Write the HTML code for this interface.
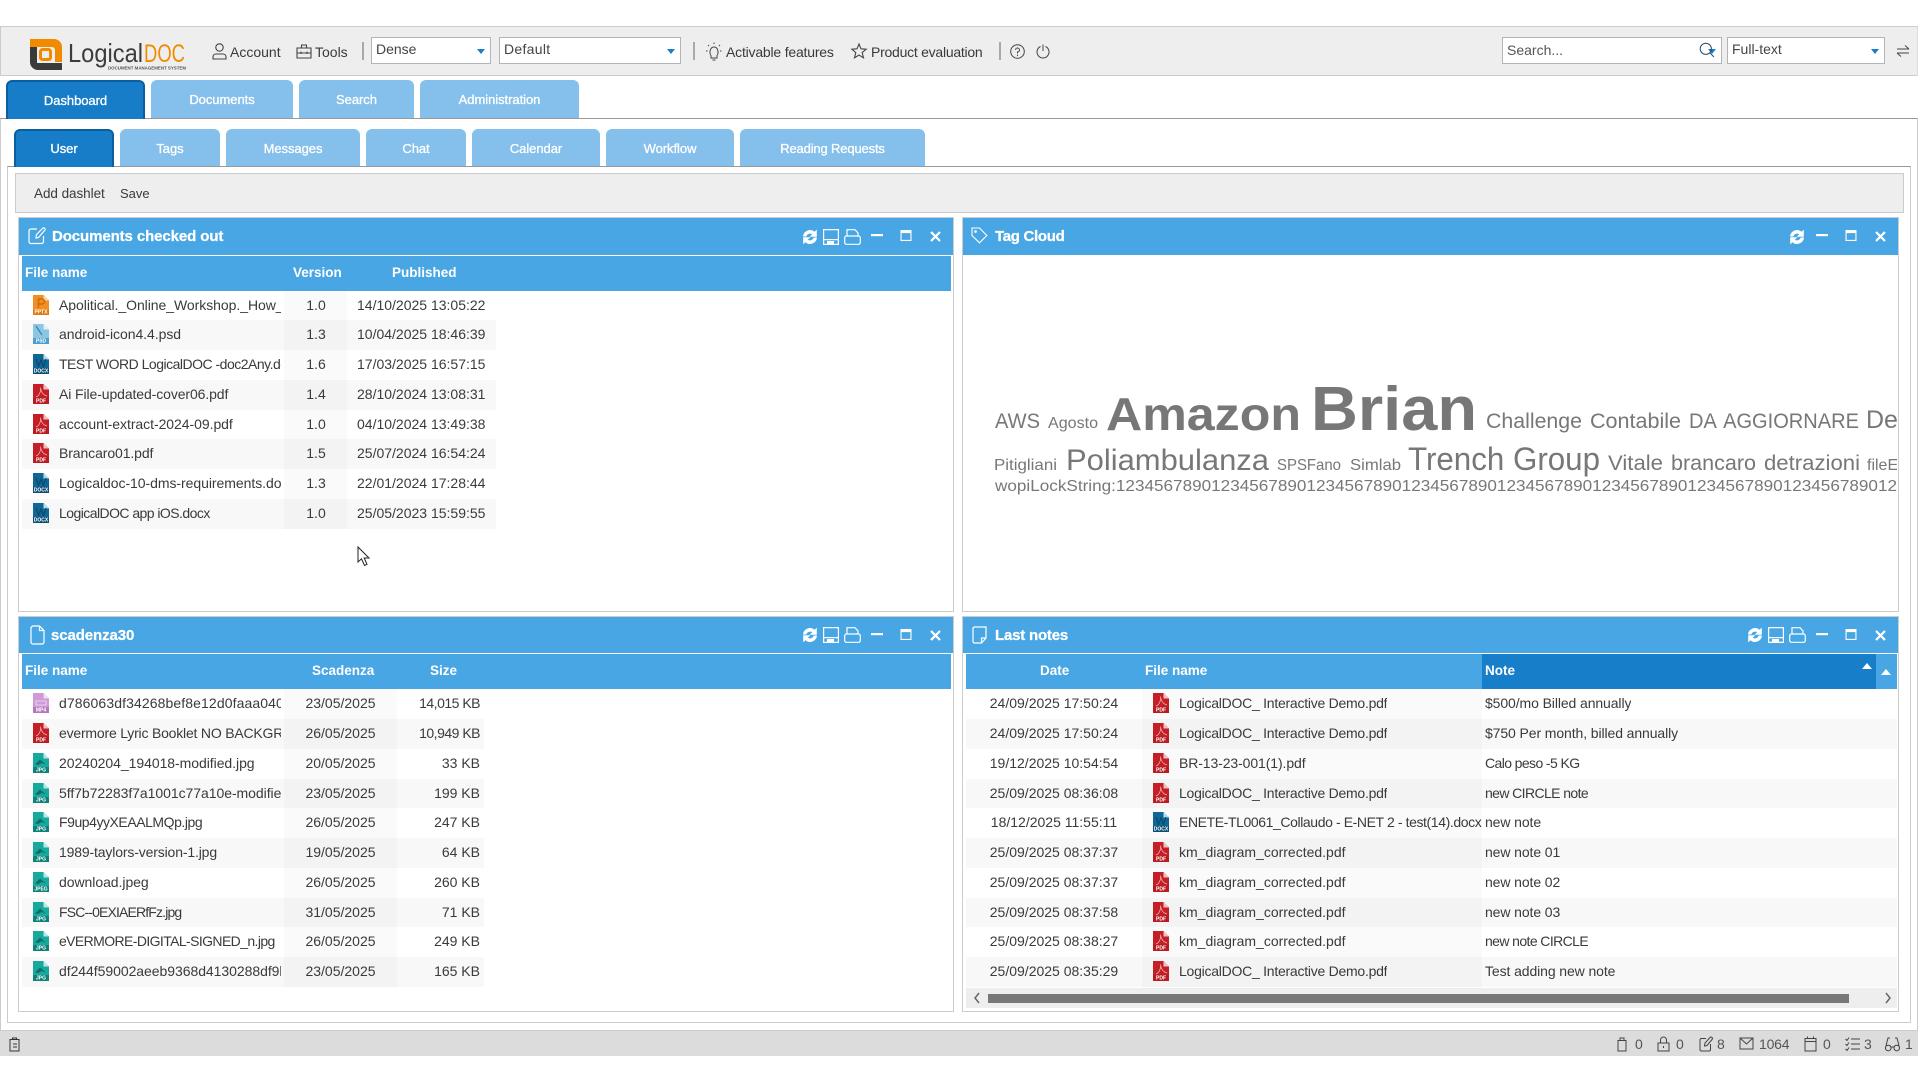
<!DOCTYPE html>
<html lang="en"><head><meta charset="utf-8"><title>LogicalDOC</title>
<style>
html,body{margin:0;padding:0;background:#fff}
body{width:1920px;height:1080px;position:relative;overflow:hidden;font:14px "Liberation Sans",sans-serif;color:#3a3a3a}
.a{position:absolute;box-sizing:border-box}
.t{position:absolute;white-space:nowrap;line-height:20px;height:20px}
svg{position:absolute;overflow:visible}
.tab{position:absolute;box-sizing:border-box;background:#85bfec;color:#fff;font-size:13px;text-align:center;border-radius:6px 6px 0 0;-webkit-text-stroke:.3px #fff;letter-spacing:-.05px}
.tab.on{background:#187dc9;border:2px solid #0a5f9f;border-bottom:0}
.t1{top:80px;height:38px;line-height:40px}
.t2{top:129px;height:37px;line-height:39px}
.tab.t1.on{line-height:37px}
.tab.t2.on{line-height:36px}
.sel{position:absolute;top:37px;height:27px;background:#fff;border:1.5px solid #b4b4b4;box-sizing:border-box;line-height:23px;padding-left:4px;color:#444}
.sel:after{content:"";position:absolute;top:11px;right:5px;border:4.5px solid transparent;border-top:5.5px solid #1a7dc8;border-bottom:0}
.sep{position:absolute;top:42px;height:18px;width:1.5px;background:#a9a9a9}
.panel{position:absolute;box-sizing:border-box;border:1.5px solid #ccc;background:#fff}
.hd{position:absolute;background:#48a6e4}
.ttl{position:absolute;color:#fff;font-weight:bold;font-size:15px;line-height:20px;white-space:nowrap;letter-spacing:-.1px;-webkit-text-stroke:.25px #fff;margin-top:1px}
.th{position:absolute;color:#fff;font-weight:bold;font-size:13.5px;line-height:20px;white-space:nowrap;margin-top:-1px}
.r{position:absolute;height:30px;line-height:28px;white-space:nowrap}
.s{background:#f8f8f8}
.m{position:absolute;top:0;bottom:0;background:#fafafa}
.s .m{background:#f3f3f3}
.n{position:absolute;top:0;overflow:hidden}
.ic{left:11px;top:4px;width:16px;height:20px}
.ic text{font:bold 5px "Liberation Sans",sans-serif;fill:#fff;text-anchor:middle}
.p1{left:22px;width:474px}.p1 .m{left:262px;width:63px;text-align:center;padding-left:1px;box-sizing:border-box}
.p3{left:22px;width:462px}.p3 .m{left:262px;width:113px;text-align:center}
.p1 .n,.p3 .n{left:37px;width:222px;letter-spacing:-.05px}
.p4{left:966px;width:931px}.p4 .m{left:176px;width:340px}
.dt{position:absolute;left:335px}.sz{position:absolute;right:4px}
.sb{position:absolute;top:1034px;color:#555;line-height:20px}
svg.w{fill:none;stroke:#fff}
</style></head><body>
<svg width="0" height="0" style="position:absolute">
<defs>
<symbol id="rf" viewBox="0 0 16 16"><path fill="#fff" d="M1 7.500A7 7 0 0 1 12.600 2.800L14.800 .6V7.800H7.600L10.200 5.200A3.800 3.800 0 0 0 4.400 7.500Z M15 8.500A7 7 0 0 1 3.400 13.200L1.200 15.400V8.200H8.400L5.800 10.800A3.800 3.800 0 0 0 11.600 8.500Z"/></symbol>
<symbol id="sv" viewBox="0 0 16 16"><path fill="none" stroke="#fff" stroke-width="1.200" d="M.6.6H15.4V15.4H.6ZM.6 10.600H15.4"/><path fill="#fff" d="M4 12H11V15H4Z"/></symbol>
<symbol id="pr" viewBox="0 0 17 16"><path fill="none" stroke="#fff" stroke-width="1.200" d="M3 7V.7H11L14 4V7M2.500 7H14.500A1.800 1.800 0 0 1 16.300 8.800V13.500A1.800 1.800 0 0 1 14.500 15.300H2.500A1.800 1.800 0 0 1 .7 13.500V8.800A1.800 1.800 0 0 1 2.500 7Z"/></symbol>
<symbol id="mn" viewBox="0 0 12 3"><path fill="#fff" d="M0 0H12V2.200H0Z"/></symbol>
<symbol id="mx" viewBox="0 0 12 12"><path fill="none" stroke="#fff" stroke-width="1.200" d="M.6.6H11.400V11.400H.6Z"/><path fill="#fff" d="M0 0H12V3.400H0Z"/></symbol>
<symbol id="xx" viewBox="0 0 11 11"><path fill="none" stroke="#fff" stroke-width="2.200" d="M1 1L10 10M10 1L1 10"/></symbol>
<symbol id="pdf" viewBox="0 0 16 20"><path fill="#c41f26" d="M0 0H10.500L16 5.500V20H0Z"/><path fill="#f3c0c0" d="M10.500 0L16 5.500H10.500Z"/><path fill="none" stroke="#f0b5b5" stroke-width=".7" d="M3 13C6 12 8 8 7.500 3.500C8 8 10 11 14 12"/><path fill="#b81b21" d="M0 13.500H16V20H0Z"/></symbol>
<symbol id="doc" viewBox="0 0 16 20"><path fill="#0f6796" d="M0 0H10.500L16 5.500V20H0Z"/><path fill="#bcdcec" d="M10.500 0L16 5.500H10.500Z"/><path fill="none" stroke="#0a4a6e" stroke-width="1.200" d="M3 5L5.500 12.500L8 6L10.500 12.500L13 5"/><path fill="#0b4f74" d="M0 14H16V20H0Z"/></symbol>
<symbol id="jpg" viewBox="0 0 16 20"><path fill="#17a89e" d="M0 0H10.500L16 5.500V20H0Z"/><path fill="#b8e8e4" d="M10.500 0L16 5.500H10.500Z"/><path fill="#0b6f68" d="M2 11.500L7 6.500L13 11.500L9 10L5 12Z"/><path fill="#0e827a" d="M0 14H16V20H0Z"/></symbol>
<symbol id="ppt" viewBox="0 0 16 20"><path fill="#f28e22" d="M0 0H10.500L16 5.500V20H0Z"/><path fill="#fbd5a5" d="M10.500 0L16 5.500H10.500Z"/><path fill="none" stroke="#c96a0a" stroke-width="1.400" d="M5.500 13V4H9A2.500 2.500 0 0 1 9 9H5.500"/><path fill="#de7a12" d="M0 14.500H16V20H0Z"/></symbol>
<symbol id="psd" viewBox="0 0 16 20"><path fill="#8cc6e2" d="M0 0H10.500L16 5.500V20H0Z"/><path fill="#dff0f8" d="M10.500 0L16 5.500H10.500Z"/><path fill="none" stroke="#2f86b5" stroke-width="1.300" d="M3 2L9 11"/><path fill="#4ba0cb" d="M0 14H16V20H0Z"/></symbol>
<symbol id="mp4" viewBox="0 0 16 20"><path fill="#cf9ad6" d="M0 0H10.500L16 5.500V20H0Z"/><path fill="#eedcf0" d="M10.500 0L16 5.500H10.500Z"/><path fill="none" stroke="#f3e6f5" stroke-width=".8" d="M3 8H13V12H3Z"/><path fill="#b578bf" d="M0 14H16V20H0Z"/></symbol>
</defs>
</svg>

<!-- top bar -->
<div class="a" style="left:0;top:26px;width:1918px;height:50px;background:#eee;border:1.5px solid #ccc;border-right:1px solid #ddd"></div>
<svg style="left:28px;top:37px" width="160" height="36" viewBox="28 37 160 36">
<path fill="#f28a00" d="M30 39H54a8 8 0 0 1 8 8V62H55V50a3 3 0 0 0-3-3H30z"/>
<path fill="#3a3a3a" d="M30 47H37V63H62V70H38a8 8 0 0 1-8-8z"/>
<rect x="40.500" y="49.500" width="10" height="10" rx="2" fill="#eee" stroke="#f28a00" stroke-width="3"/>
<text x="68" y="62" font-family="Liberation Sans,sans-serif" font-size="26" fill="#3c3c3c" textLength="75" lengthAdjust="spacingAndGlyphs">Logical</text>
<text x="144" y="62" font-family="Liberation Sans,sans-serif" font-size="25" fill="#f28a00" textLength="41" lengthAdjust="spacingAndGlyphs">DOC</text>
<text x="108" y="69.500" font-family="Liberation Sans,sans-serif" font-size="4.500" font-weight="bold" fill="#555" textLength="78" lengthAdjust="spacingAndGlyphs">DOCUMENT MANAGEMENT SYSTEM</text>
</svg>

<svg style="left:212px;top:43px" width="15" height="17" viewBox="0 0 15 17" fill="none" stroke="#444" stroke-width="1.100"><circle cx="7.500" cy="4.500" r="3.700"/><path d="M1 16V13.500A3 3 0 0 1 4 11H11A3 3 0 0 1 14 13.500V16Z"/></svg>
<div class="t" style="left:230px;top:42px">Account</div>
<svg style="left:296px;top:43px" width="16" height="16" viewBox="0 0 16 16" fill="none" stroke="#444" stroke-width="1.100"><path d="M1 5H15V15H1ZM5.500 5V2H10.500V5M1 10H15M5 8.500V11M11 8.500V11"/></svg>
<div class="t" style="left:315px;top:42px">Tools</div>
<div class="sep" style="left:362px"></div>
<div class="sel" style="left:371px;width:120px">Dense</div>
<div class="sel" style="left:499px;width:182px;letter-spacing:.3px">Default</div>
<div class="sep" style="left:693px"></div>
<svg style="left:705px;top:42px" width="18" height="19" viewBox="0 0 18 19" fill="none" stroke="#444" stroke-width="1"><path d="M6 13.500C4 11 5 5 9 5S14 11 12 13.500V16H6ZM7.500 18H10.500"/><path stroke-dasharray="1.500 1" d="M1 9H3M15 9H17M3 3L4.500 4.500M15 3L13.500 4.500M9 .5V2.500"/></svg>
<div class="t" style="left:726px;top:42px;letter-spacing:-.2px">Activable features</div>
<svg style="left:851px;top:43px" width="16" height="16" viewBox="0 0 16 16" fill="none" stroke="#444" stroke-width="1.100"><path d="M8 1L10 5.800L15.200 6.200L11.200 9.600L12.500 14.800L8 12L3.500 14.800L4.800 9.600L.8 6.200L6 5.800Z"/></svg>
<div class="t" style="left:871px;top:42px;letter-spacing:-.25px">Product evaluation</div>
<div class="sep" style="left:999px"></div>
<svg style="left:1010px;top:44px" width="15" height="15" viewBox="0 0 15 15" fill="none" stroke="#444" stroke-width="1"><circle cx="7.500" cy="7.500" r="6.800"/><path d="M5.500 5.800A2 2 0 1 1 7.500 8V9.500M7.500 10.800V12"/></svg>
<svg style="left:1036px;top:44px" width="14" height="15" viewBox="0 0 14 15" fill="none" stroke="#444" stroke-width="1"><path d="M4.500 2.500A6 6 0 1 0 9.500 2.500M7 .5V7"/></svg>

<div class="sel" style="left:1502px;width:220px;color:#555;line-height:24px">Search...</div>
<svg style="left:1699px;top:42px" width="16" height="16" viewBox="0 0 16 16" fill="none" stroke="#2a4a66" stroke-width="1"><circle cx="6.800" cy="6.800" r="5.600"/><path d="M10.800 10.800L15 15"/></svg>
<div class="sel" style="left:1727px;width:158px">Full-text</div>
<svg style="left:1896px;top:44px" width="14" height="14" viewBox="0 0 14 14" fill="none" stroke="#444" stroke-width="1"><path d="M1 5H13M9 1.500L13 5M13 9H1M5 12.500L1 9"/></svg>

<!-- main frames -->
<div class="a" style="left:0;top:118px;width:1918px;height:913px;border:1.5px solid #ccc;border-top:1.5px solid #999;border-bottom:0"></div>
<div class="tab t1 on" style="left:6px;width:139px;height:39px">Dashboard</div>
<div class="tab t1" style="left:151px;width:142px">Documents</div>
<div class="tab t1" style="left:299px;width:115px">Search</div>
<div class="tab t1" style="left:420px;width:159px">Administration</div>

<div class="a" style="left:7px;top:166px;width:1904px;height:857px;border:1.5px solid #ccc;border-top:1.5px solid #999"></div>
<div class="tab t2 on" style="left:14px;width:100px;height:38px">User</div>
<div class="tab t2" style="left:120px;width:100px">Tags</div>
<div class="tab t2" style="left:226px;width:134px">Messages</div>
<div class="tab t2" style="left:366px;width:100px">Chat</div>
<div class="tab t2" style="left:472px;width:128px">Calendar</div>
<div class="tab t2" style="left:606px;width:128px">Workflow</div>
<div class="tab t2" style="left:740px;width:185px;letter-spacing:-.15px">Reading Requests</div>

<div class="a" style="left:15px;top:173px;width:1889px;height:40px;background:#eee;border:1.500px solid #ccc"></div>
<div class="t" style="left:34px;top:184px;font-size:13.500px;letter-spacing:-.05px">Add dashlet</div>
<div class="t" style="left:120px;top:184px;font-size:13px">Save</div>

<!-- panel 1 -->
<div class="panel" style="left:18px;top:217px;width:936px;height:395px"></div>
<div class="hd" style="left:19px;top:218px;width:934px;height:37px"></div>
<svg class="w" style="left:28px;top:226px" width="18" height="19" viewBox="0 0 18 19" stroke-width="1.200"><path d="M9 3H3A2 2 0 0 0 1 5V15.500A2 2 0 0 0 3 17.500H13.500A2 2 0 0 0 15.500 15.500V10M8 12L8.500 8.500L15 2A1.500 1.500 0 0 1 17 4L10.500 11.500Z"/></svg>
<div class="ttl" style="left:52px;top:226px">Documents checked out</div>
<svg style="left:802px;top:229px" width="16" height="16"><use href="#rf"/></svg>
<svg style="left:823px;top:229px" width="16" height="16"><use href="#sv"/></svg>
<svg style="left:844px;top:229px" width="17" height="16"><use href="#pr"/></svg>
<svg style="left:871px;top:234px" width="12" height="3"><use href="#mn"/></svg>
<svg style="left:900px;top:230px" width="12" height="11"><use href="#mx"/></svg>
<svg style="left:930px;top:231px" width="11" height="11"><use href="#xx"/></svg>

<div class="hd" style="left:22px;top:256px;width:929px;height:35px"></div>
<div class="th" style="left:25px;top:264px">File name</div>
<div class="th" style="left:293px;top:264px">Version</div>
<div class="th" style="left:392px;top:264px">Published</div>

<div class="r p1" style="top:291px;height:29px"><svg class="ic" viewBox="0 0 16 20"><use href="#ppt"/><text x="8" y="18.500">PPTX</text></svg><span class="n">Apolitical._Online_Workshop._How_to_build</span><span class="m">1.0</span><span class="dt">14/10/2025 13:05:22</span></div>
<div class="r p1 s" style="top:320px"><svg class="ic" viewBox="0 0 16 20"><use href="#psd"/><text x="8" y="18.500">PSD</text></svg><span class="n">android-icon4.4.psd</span><span class="m">1.3</span><span class="dt">10/04/2025 18:46:39</span></div>
<div class="r p1" style="top:350px"><svg class="ic" viewBox="0 0 16 20"><use href="#doc"/><text x="8" y="18.500">DOCX</text></svg><span class="n" style="letter-spacing:-.5px">TEST WORD LogicalDOC -doc2Any.docx</span><span class="m">1.6</span><span class="dt">17/03/2025 16:57:15</span></div>
<div class="r p1 s" style="top:380px"><svg class="ic" viewBox="0 0 16 20"><use href="#pdf"/><text x="8" y="18.500">PDF</text></svg><span class="n" style="letter-spacing:-.1px">Ai File-updated-cover06.pdf</span><span class="m">1.4</span><span class="dt">28/10/2024 13:08:31</span></div>
<div class="r p1" style="top:410px;height:29px"><svg class="ic" viewBox="0 0 16 20"><use href="#pdf"/><text x="8" y="18.500">PDF</text></svg><span class="n">account-extract-2024-09.pdf</span><span class="m">1.0</span><span class="dt">04/10/2024 13:49:38</span></div>
<div class="r p1 s" style="top:439px"><svg class="ic" viewBox="0 0 16 20"><use href="#pdf"/><text x="8" y="18.500">PDF</text></svg><span class="n" style="letter-spacing:-.1px">Brancaro01.pdf</span><span class="m">1.5</span><span class="dt">25/07/2024 16:54:24</span></div>
<div class="r p1" style="top:469px"><svg class="ic" viewBox="0 0 16 20"><use href="#doc"/><text x="8" y="18.500">DOCX</text></svg><span class="n">Logicaldoc-10-dms-requirements.docx</span><span class="m">1.3</span><span class="dt">22/01/2024 17:28:44</span></div>
<div class="r p1 s" style="top:499px"><svg class="ic" viewBox="0 0 16 20"><use href="#doc"/><text x="8" y="18.500">DOCX</text></svg><span class="n" style="letter-spacing:-.55px">LogicalDOC app iOS.docx</span><span class="m">1.0</span><span class="dt">25/05/2023 15:59:55</span></div>

<!-- panel 2 -->
<div class="panel" style="left:962px;top:217px;width:937px;height:395px"></div>
<div class="hd" style="left:963px;top:218px;width:935px;height:37px"></div>
<svg class="w" style="left:971px;top:227px" width="17" height="17" viewBox="0 0 17 17" stroke-width="1.100"><path d="M1 1H8.500L15.800 8.500L8.500 15.800L1 8.500Z"/><circle cx="4.500" cy="4.500" r=".8"/></svg>
<div class="ttl" style="left:995px;top:226px;letter-spacing:-.3px">Tag Cloud</div>
<svg style="left:1789px;top:229px" width="16" height="16"><use href="#rf"/></svg>
<svg style="left:1816px;top:234px" width="12" height="3"><use href="#mn"/></svg>
<svg style="left:1845px;top:230px" width="12" height="11"><use href="#mx"/></svg>
<svg style="left:1875px;top:231px" width="11" height="11"><use href="#xx"/></svg>

<div class="a" style="left:963px;top:256px;width:934px;height:354px;overflow:hidden">
<svg style="left:0;top:0" width="934" height="354" viewBox="963 256 934 354" font-family="Liberation Sans,sans-serif" fill="#777">
<text x="995" y="428" font-size="21" textLength="45" lengthAdjust="spacingAndGlyphs">AWS</text>
<text x="1048" y="428" font-size="16" textLength="50" lengthAdjust="spacingAndGlyphs">Agosto</text>
<text x="1106" y="430" font-size="46" font-weight="bold" textLength="195" lengthAdjust="spacingAndGlyphs">Amazon</text>
<text x="1311" y="430" font-size="62" font-weight="bold" textLength="166" lengthAdjust="spacingAndGlyphs">Brian</text>
<text x="1486" y="428" font-size="21" textLength="96" lengthAdjust="spacingAndGlyphs">Challenge</text>
<text x="1590" y="428" font-size="21" textLength="91" lengthAdjust="spacingAndGlyphs">Contabile</text>
<text x="1689" y="428" font-size="21" word-spacing="3" textLength="170" lengthAdjust="spacingAndGlyphs">DA AGGIORNARE</text>
<text x="1866" y="428" font-size="25">De</text>
<text x="994" y="470" font-size="16" textLength="63" lengthAdjust="spacingAndGlyphs">Pitigliani</text>
<text x="1066" y="470" font-size="30" textLength="203" lengthAdjust="spacingAndGlyphs">Poliambulanza</text>
<text x="1277" y="470" font-size="16" textLength="64" lengthAdjust="spacingAndGlyphs">SPSFano</text>
<text x="1350" y="470" font-size="16" textLength="51" lengthAdjust="spacingAndGlyphs">Simlab</text>
<text x="1408" y="470" font-size="32" textLength="192" lengthAdjust="spacingAndGlyphs">Trench Group</text>
<text x="1608" y="470" font-size="21" textLength="55" lengthAdjust="spacingAndGlyphs">Vitale</text>
<text x="1671" y="470" font-size="21" textLength="85" lengthAdjust="spacingAndGlyphs">brancaro</text>
<text x="1764" y="470" font-size="21" textLength="96" lengthAdjust="spacingAndGlyphs">detrazioni</text>
<text x="1867" y="470" font-size="16">fileE</text>
<text x="995" y="491" font-size="16" textLength="902" lengthAdjust="spacingAndGlyphs">wopiLockString:1234567890123456789012345678901234567890123456789012345678901234567890123456789012</text>
</svg></div>

<!-- panel 3 -->
<div class="panel" style="left:18px;top:616px;width:936px;height:396px"></div>
<div class="hd" style="left:19px;top:617px;width:934px;height:36px"></div>
<svg class="w" style="left:30px;top:625px" width="15" height="20" viewBox="0 0 15 20" stroke-width="1.200"><path d="M2.500 1H9.500L14 5.500V17A2 2 0 0 1 12 19H3A2 2 0 0 1 1 17V2.500Z M9.500 1V5.500H14"/></svg>
<div class="ttl" style="left:51px;top:625px;letter-spacing:-.1px">scadenza30</div>
<svg style="left:802px;top:627px" width="16" height="16"><use href="#rf"/></svg>
<svg style="left:823px;top:627px" width="16" height="16"><use href="#sv"/></svg>
<svg style="left:844px;top:627px" width="17" height="16"><use href="#pr"/></svg>
<svg style="left:871px;top:633px" width="12" height="3"><use href="#mn"/></svg>
<svg style="left:900px;top:629px" width="12" height="11"><use href="#mx"/></svg>
<svg style="left:930px;top:630px" width="11" height="11"><use href="#xx"/></svg>

<div class="hd" style="left:22px;top:654px;width:929px;height:35px"></div>
<div class="th" style="left:25px;top:662px">File name</div>
<div class="th" style="left:312px;top:662px">Scadenza</div>
<div class="th" style="left:430px;top:662px">Size</div>

<div class="r p3" style="top:689px"><svg class="ic" viewBox="0 0 16 20"><use href="#mp4"/><text x="8" y="18.500">MP4</text></svg><span class="n" style="letter-spacing:.1px">d786063df34268bef8e12d0faaa040b12345</span><span class="m">23/05/2025</span><span class="sz" style="letter-spacing:-.5px">14,015 KB</span></div>
<div class="r p3 s" style="top:719px"><svg class="ic" viewBox="0 0 16 20"><use href="#pdf"/><text x="8" y="18.500">PDF</text></svg><span class="n" style="letter-spacing:-.2px">evermore Lyric Booklet NO BACKGROUND.pdf</span><span class="m">26/05/2025</span><span class="sz" style="letter-spacing:-.5px">10,949 KB</span></div>
<div class="r p3" style="top:749px"><svg class="ic" viewBox="0 0 16 20"><use href="#jpg"/><text x="8" y="18.500">JPG</text></svg><span class="n">20240204_194018-modified.jpg</span><span class="m">20/05/2025</span><span class="sz">33 KB</span></div>
<div class="r p3 s" style="top:779px;height:29px"><svg class="ic" viewBox="0 0 16 20"><use href="#jpg"/><text x="8" y="18.500">JPG</text></svg><span class="n">5ff7b72283f7a1001c77a10e-modified.jpg</span><span class="m">23/05/2025</span><span class="sz">199 KB</span></div>
<div class="r p3" style="top:808px"><svg class="ic" viewBox="0 0 16 20"><use href="#jpg"/><text x="8" y="18.500">JPG</text></svg><span class="n" style="letter-spacing:-.45px">F9up4yyXEAALMQp.jpg</span><span class="m">26/05/2025</span><span class="sz">247 KB</span></div>
<div class="r p3 s" style="top:838px"><svg class="ic" viewBox="0 0 16 20"><use href="#jpg"/><text x="8" y="18.500">JPG</text></svg><span class="n" style="letter-spacing:-.15px">1989-taylors-version-1.jpg</span><span class="m">19/05/2025</span><span class="sz">64 KB</span></div>
<div class="r p3" style="top:868px"><svg class="ic" viewBox="0 0 16 20"><use href="#jpg"/><text x="8" y="18.500">JPEG</text></svg><span class="n">download.jpeg</span><span class="m">26/05/2025</span><span class="sz">260 KB</span></div>
<div class="r p3 s" style="top:898px;height:29px"><svg class="ic" viewBox="0 0 16 20"><use href="#jpg"/><text x="8" y="18.500">JPG</text></svg><span class="n" style="letter-spacing:-.85px">FSC--0EXIAERfFz.jpg</span><span class="m">31/05/2025</span><span class="sz">71 KB</span></div>
<div class="r p3" style="top:927px"><svg class="ic" viewBox="0 0 16 20"><use href="#jpg"/><text x="8" y="18.500">JPG</text></svg><span class="n" style="letter-spacing:-.6px">eVERMORE-DIGITAL-SIGNED_n.jpg</span><span class="m">26/05/2025</span><span class="sz">249 KB</span></div>
<div class="r p3 s" style="top:957px"><svg class="ic" viewBox="0 0 16 20"><use href="#jpg"/><text x="8" y="18.500">JPG</text></svg><span class="n">df244f59002aeeb9368d4130288df9b123</span><span class="m">23/05/2025</span><span class="sz">165 KB</span></div>

<!-- panel 4 -->
<div class="panel" style="left:962px;top:616px;width:937px;height:396px"></div>
<div class="hd" style="left:963px;top:617px;width:935px;height:36px"></div>
<svg class="w" style="left:972px;top:626px" width="15" height="18" viewBox="0 0 15 18" stroke-width="1.200"><path d="M2.500 1H14V12L9.500 17H2.500A1.500 1.500 0 0 1 1 15.500V2.500A1.500 1.500 0 0 1 2.500 1ZM14 12H9.500V17"/></svg>
<div class="ttl" style="left:995px;top:625px;letter-spacing:-.2px">Last notes</div>
<svg style="left:1747px;top:627px" width="16" height="16"><use href="#rf"/></svg>
<svg style="left:1768px;top:627px" width="16" height="16"><use href="#sv"/></svg>
<svg style="left:1789px;top:627px" width="17" height="16"><use href="#pr"/></svg>
<svg style="left:1816px;top:633px" width="12" height="3"><use href="#mn"/></svg>
<svg style="left:1845px;top:629px" width="12" height="11"><use href="#mx"/></svg>
<svg style="left:1875px;top:630px" width="11" height="11"><use href="#xx"/></svg>

<div class="hd" style="left:966px;top:654px;width:931px;height:35px"></div>
<div class="a" style="left:1482px;top:654px;width:394px;height:35px;background:#177ec9"></div>
<div class="th" style="left:1040px;top:662px">Date</div>
<div class="th" style="left:1145px;top:662px">File name</div>
<div class="th" style="left:1485px;top:662px">Note</div>
<svg style="left:1862px;top:663px" width="10" height="6"><path fill="#fff" d="M5 0L10 6H0Z"/></svg>
<svg style="left:1881px;top:669px" width="10" height="6"><path fill="#fff" d="M5 0L10 6H0Z"/></svg>

<div class="r p4" style="top:689px"><span class="m"></span><span class="n" style="left:0;width:176px;text-align:center">24/09/2025 17:50:24</span><svg class="ic" style="left:187px" viewBox="0 0 16 20"><use href="#pdf"/><text x="8" y="18.500">PDF</text></svg><span class="n" style="left:213px;letter-spacing:-.25px">LogicalDOC_ Interactive Demo.pdf</span><span class="n" style="left:519px;letter-spacing:-.1px">$500/mo Billed annually</span></div>
<div class="r p4 s" style="top:719px"><span class="m"></span><span class="n" style="left:0;width:176px;text-align:center">24/09/2025 17:50:24</span><svg class="ic" style="left:187px" viewBox="0 0 16 20"><use href="#pdf"/><text x="8" y="18.500">PDF</text></svg><span class="n" style="left:213px;letter-spacing:-.25px">LogicalDOC_ Interactive Demo.pdf</span><span class="n" style="left:519px;letter-spacing:-.1px">$750 Per month, billed annually</span></div>
<div class="r p4" style="top:749px"><span class="m"></span><span class="n" style="left:0;width:176px;text-align:center">19/12/2025 10:54:54</span><svg class="ic" style="left:187px" viewBox="0 0 16 20"><use href="#pdf"/><text x="8" y="18.500">PDF</text></svg><span class="n" style="left:213px;letter-spacing:-.1px">BR-13-23-001(1).pdf</span><span class="n" style="left:519px;letter-spacing:-.6px">Calo peso -5 KG</span></div>
<div class="r p4 s" style="top:779px;height:29px"><span class="m"></span><span class="n" style="left:0;width:176px;text-align:center">25/09/2025 08:36:08</span><svg class="ic" style="left:187px" viewBox="0 0 16 20"><use href="#pdf"/><text x="8" y="18.500">PDF</text></svg><span class="n" style="left:213px;letter-spacing:-.25px">LogicalDOC_ Interactive Demo.pdf</span><span class="n" style="left:519px;letter-spacing:-.6px">new CIRCLE note</span></div>
<div class="r p4" style="top:808px"><span class="m"></span><span class="n" style="left:0;width:176px;text-align:center">18/12/2025 11:55:11</span><svg class="ic" style="left:187px" viewBox="0 0 16 20"><use href="#doc"/><text x="8" y="18.500">DOCX</text></svg><span class="n" style="left:213px;width:303px;letter-spacing:-.4px">ENETE-TL0061_Collaudo - E-NET 2 - test(14).docx</span><span class="n" style="left:519px;letter-spacing:-.1px">new note</span></div>
<div class="r p4 s" style="top:838px"><span class="m"></span><span class="n" style="left:0;width:176px;text-align:center">25/09/2025 08:37:37</span><svg class="ic" style="left:187px" viewBox="0 0 16 20"><use href="#pdf"/><text x="8" y="18.500">PDF</text></svg><span class="n" style="left:213px">km_diagram_corrected.pdf</span><span class="n" style="left:519px;letter-spacing:-.1px">new note 01</span></div>
<div class="r p4" style="top:868px"><span class="m"></span><span class="n" style="left:0;width:176px;text-align:center">25/09/2025 08:37:37</span><svg class="ic" style="left:187px" viewBox="0 0 16 20"><use href="#pdf"/><text x="8" y="18.500">PDF</text></svg><span class="n" style="left:213px">km_diagram_corrected.pdf</span><span class="n" style="left:519px;letter-spacing:-.1px">new note 02</span></div>
<div class="r p4 s" style="top:898px;height:29px"><span class="m"></span><span class="n" style="left:0;width:176px;text-align:center">25/09/2025 08:37:58</span><svg class="ic" style="left:187px" viewBox="0 0 16 20"><use href="#pdf"/><text x="8" y="18.500">PDF</text></svg><span class="n" style="left:213px">km_diagram_corrected.pdf</span><span class="n" style="left:519px;letter-spacing:-.1px">new note 03</span></div>
<div class="r p4" style="top:927px"><span class="m"></span><span class="n" style="left:0;width:176px;text-align:center">25/09/2025 08:38:27</span><svg class="ic" style="left:187px" viewBox="0 0 16 20"><use href="#pdf"/><text x="8" y="18.500">PDF</text></svg><span class="n" style="left:213px">km_diagram_corrected.pdf</span><span class="n" style="left:519px;letter-spacing:-.6px">new note CIRCLE</span></div>
<div class="r p4 s" style="top:957px"><span class="m"></span><span class="n" style="left:0;width:176px;text-align:center">25/09/2025 08:35:29</span><svg class="ic" style="left:187px" viewBox="0 0 16 20"><use href="#pdf"/><text x="8" y="18.500">PDF</text></svg><span class="n" style="left:213px;letter-spacing:-.25px">LogicalDOC_ Interactive Demo.pdf</span><span class="n" style="left:519px;letter-spacing:-.1px">Test adding new note</span></div>

<div class="a" style="left:966px;top:988px;width:931px;height:20px;background:#eee"></div>
<div class="a" style="left:988px;top:994px;width:861px;height:9px;background:#777"></div>
<svg style="left:973px;top:992px" width="8" height="12" fill="none" stroke="#666" stroke-width="1.500"><path d="M6 1L2 6L6 11"/></svg>
<svg style="left:1884px;top:992px" width="8" height="12" fill="none" stroke="#666" stroke-width="1.500"><path d="M2 1L6 6L2 11"/></svg>

<!-- cursor -->
<svg style="left:357px;top:546px" width="15" height="21" viewBox="0 0 15 21"><path fill="#fff" stroke="#222" stroke-width="1" d="M1 1V16L4.500 12.800L7.500 19.500L10 18.300L7.200 12H12Z"/></svg>

<!-- status bar -->
<div class="a" style="left:0;top:1030px;width:1918px;height:26px;background:#dcdcdc;border-top:1.5px solid #ccc"></div>
<svg style="left:9px;top:1037px" width="11" height="15" viewBox="0 0 11 15" fill="none" stroke="#333" stroke-width="1"><path d="M1 2.500H10V14H1ZM3.500 2.500V1H7.500V2.500M4 7H8M4 10H8"/></svg>
<svg style="left:1617px;top:1037px" width="10" height="15" viewBox="0 0 10 15" fill="none" stroke="#444" stroke-width="1"><path d="M1 3.500H9V14H1ZM3 3.500V1H7V3.500"/></svg><span class="sb" style="left:1635px">0</span>
<svg style="left:1657px;top:1036px" width="13" height="16" viewBox="0 0 13 16" fill="none" stroke="#444" stroke-width="1"><path d="M1 7H12V15H1ZM3.500 7V4A3 3 0 0 1 9.500 4V7M6.500 10V12"/></svg><span class="sb" style="left:1676px">0</span>
<svg style="left:1699px;top:1036px" width="14" height="16" viewBox="0 0 14 16" fill="none" stroke="#444" stroke-width="1"><path d="M7 2.500H2.500A1.500 1.500 0 0 0 1 4V13.500A1.500 1.500 0 0 0 2.500 15H10A1.500 1.500 0 0 0 11.500 13.500V8M5.500 10L6 7L11 1.500A1.200 1.200 0 0 1 13 3.500L8 9.500Z"/></svg><span class="sb" style="left:1717px">8</span>
<svg style="left:1739px;top:1037px" width="15" height="13" viewBox="0 0 15 13" fill="none" stroke="#444" stroke-width="1"><path d="M1 1H14V12H1ZM1 1L7.500 7L14 1"/></svg><span class="sb" style="left:1759px;letter-spacing:-.2px">1064</span>
<svg style="left:1804px;top:1036px" width="13" height="16" viewBox="0 0 13 16" fill="none" stroke="#444" stroke-width="1"><path d="M1 2.500H12V15H1ZM1 5.500H12M3.500 .5V3M9.500 .5V3"/></svg><span class="sb" style="left:1823px">0</span>
<svg style="left:1845px;top:1037px" width="15" height="14" viewBox="0 0 15 14" fill="none" stroke="#444" stroke-width="1"><path d="M6 2H15M6 7H15M6 12H15M.5 2L2 3.500L4 .5M.5 7L2 8.500L4 5.500M.5 12L2 13.500L4 10.500"/></svg><span class="sb" style="left:1864px">3</span>
<svg style="left:1885px;top:1037px" width="15" height="14" viewBox="0 0 15 14" fill="none" stroke="#444" stroke-width="1"><path d="M1 8.500L3 1H5M14 8.500L12 1H10M6 10.500A2.800 2.800 0 1 1 .5 10.500A2.800 2.800 0 0 1 6 10.500ZM14.500 10.500A2.800 2.800 0 1 1 9 10.500A2.800 2.800 0 0 1 14.500 10.500ZM6 10H9"/></svg><span class="sb" style="left:1905px">1</span>
</body></html>
